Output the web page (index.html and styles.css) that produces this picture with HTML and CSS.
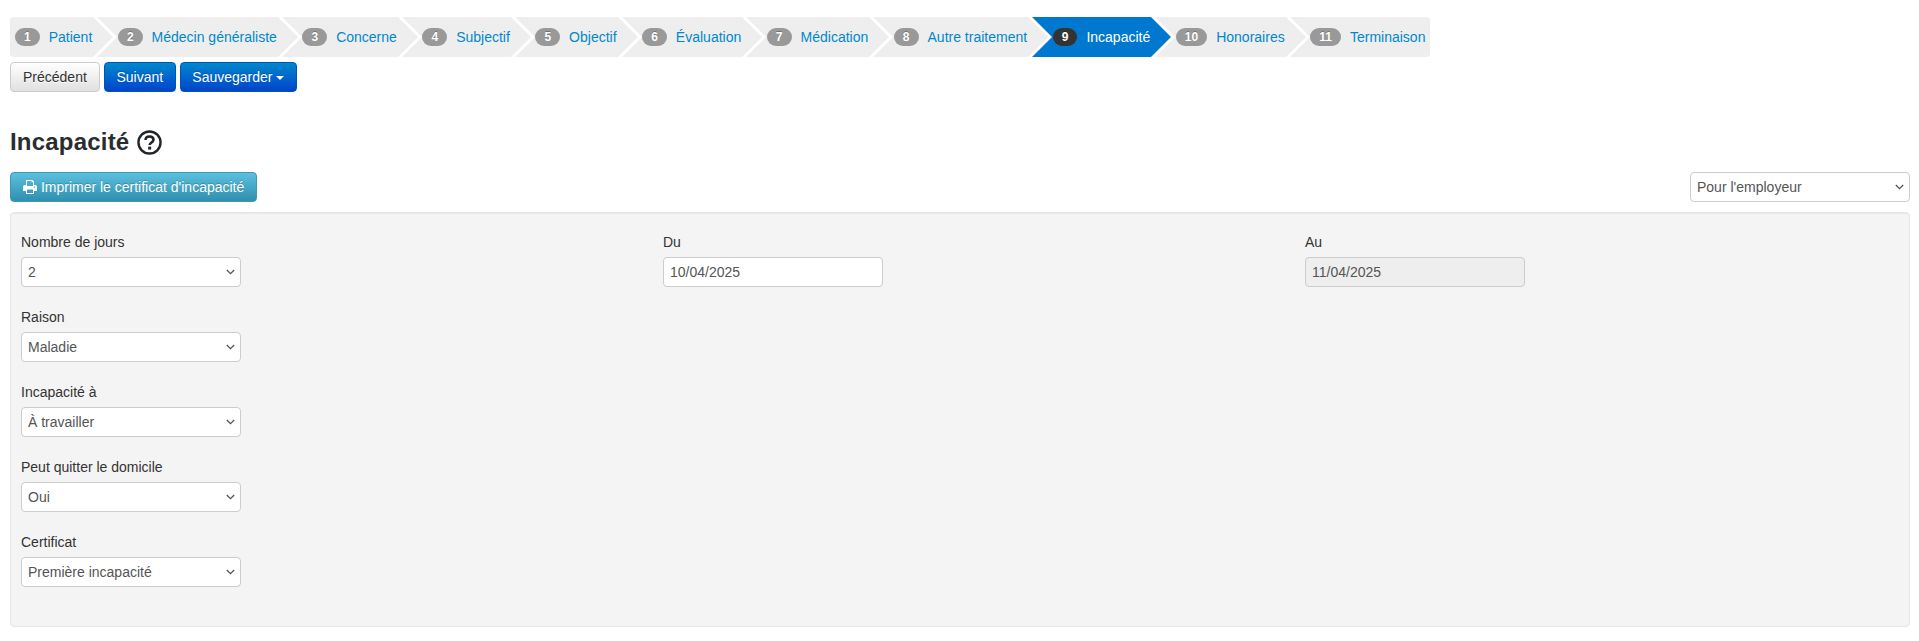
FILE: index.html
```html
<!DOCTYPE html>
<html lang="fr">
	<head>
		<meta charset="utf-8">
		<title>Incapacité</title>
		<link rel="stylesheet" href="styles.css">
	</head>
	<body>
		<ol class="wizard">
			<li class="step"><span class="badge">1</span><a href="#">Patient</a></li>
			<li class="step"><span class="badge">2</span><a href="#">Médecin généraliste</a></li>
			<li class="step"><span class="badge">3</span><a href="#">Concerne</a></li>
			<li class="step"><span class="badge">4</span><a href="#">Subjectif</a></li>
			<li class="step"><span class="badge">5</span><a href="#">Objectif</a></li>
			<li class="step"><span class="badge">6</span><a href="#">Évaluation</a></li>
			<li class="step"><span class="badge">7</span><a href="#">Médication</a></li>
			<li class="step"><span class="badge">8</span><a href="#">Autre traitement</a></li>
			<li class="step active"><span class="badge">9</span><a href="#">Incapacité</a></li>
			<li class="step"><span class="badge">10</span><a href="#">Honoraires</a></li>
			<li class="step last"><span class="badge">11</span><a href="#">Terminaison</a></li>
		</ol>

		<div class="toolbar">
			<button type="button" class="btn btn-default">Précédent</button>
			<button type="button" class="btn btn-primary">Suivant</button>
			<button type="button" class="btn btn-primary">Sauvegarder<span class="caret"></span></button>
		</div>

		<h2 class="title">Incapacité
			<svg class="help" width="25" height="25" viewBox="0 0 24 24">
				<circle cx="12" cy="12" r="10.6" fill="none" stroke="#212529" stroke-width="2.3"/>
				<path d="M8.200 9.700c0-2.300 1.700-3.500 3.800-3.500s3.800 1.200 3.800 3.100c0 2.700-3.600 2.600-3.600 5.200" fill="none" stroke="#212529" stroke-width="2.5"/>
				<rect x="10.700" y="16" width="2.900" height="2.800" fill="#212529"/>
			</svg>
		</h2>

		<div class="actions">
			<button type="button" class="btn btn-info">
				<svg class="print" width="14" height="14" viewBox="0 0 14 14">
					<path fill="#fff" fill-rule="evenodd" d="M3 0h6.500L11 1.500V5h1.200C13.200 5 14 5.800 14 6.800V11h-3v3H3v-3H0V6.800C0 5.800.8 5 1.800 5H3zM4 1v5h6V2.300H8.700V1zM4 9.500V13h6V9.500zM11.500 6.300a.7.7 0 1 0 0 1.400.7.7 0 0 0 0-1.400z"/>
				</svg>
				Imprimer le certificat d'incapacité
			</button>
			<select class="field">
				<option>Pour l'employeur</option>
			</select>
		</div>

		<form class="panel">
			<div class="col">
				<div class="group">
					<label>Nombre de jours</label>
					<select class="field"><option>2</option></select>
				</div>
				<div class="group">
					<label>Raison</label>
					<select class="field"><option>Maladie</option></select>
				</div>
				<div class="group">
					<label>Incapacité à</label>
					<select class="field"><option>À travailler</option></select>
				</div>
				<div class="group">
					<label>Peut quitter le domicile</label>
					<select class="field"><option>Oui</option></select>
				</div>
				<div class="group">
					<label>Certificat</label>
					<select class="field"><option>Première incapacité</option></select>
				</div>
			</div>
			<div class="col">
				<div class="group">
					<label>Du</label>
					<input class="field" type="text" value="10/04/2025">
				</div>
			</div>
			<div class="col">
				<div class="group">
					<label>Au</label>
					<input class="field" type="text" value="11/04/2025" disabled>
				</div>
			</div>
		</form>
	</body>
</html>
```

FILE: styles.css
```css
* {
	box-sizing: border-box;
}

body {
	margin: 0;
	padding: 17px 9px 0 10px;
	font-family: "Liberation Sans", Arial, sans-serif;
	font-size: 14px;
	line-height: 20px;
	color: #333;
	background-color: #fff;
}

/* wizard */
.wizard {
	display: flex;
	width: max-content;
	height: 40px;
	margin: 0;
	padding: 0;
	list-style: none;
	background-color: #eee;
	border-radius: 4px;
	overflow: hidden;
}

.step {
	position: relative;
	display: flex;
	align-items: center;
	padding: 0 1px 0 24.6px;
}

.step:first-child {
	padding-left: 5px;
}

.step::before,
.step::after {
	content: "";
	position: absolute;
	left: 100%;
	z-index: 1;
	border-style: solid;
	border-color: transparent;
}

/* white line of the chevron, sticks out of the bar by 4px */
.step::before {
	top: -4px;
	border-width: 24px 0 24px 24px;
	border-left-color: #fff;
}

.step::after {
	top: 0;
	border-width: 20px 0 20px 20px;
	border-left-color: #eee;
}

.step.last {
	padding-right: 5px;
}

.step.last::before,
.step.last::after {
	display: none;
}

.step a {
	color: #0088cc;
	text-decoration: none;
}

.badge {
	margin-right: 9px;
	padding: 3px 9px;
	font-size: 12px;
	font-weight: bold;
	line-height: 12px;
	color: #fff;
	background-color: #999;
	border-radius: 9px;
	text-shadow: 0 -1px 0 rgba(0, 0, 0, 0.25);
}

.step.active {
	background-color: #0078cf;
}

.step.active::after {
	border-left-color: #0078cf;
}

.step.active a {
	color: #fff;
}

.step.active .badge {
	background-color: #333;
}

/* buttons */
.btn {
	display: inline-block;
	height: 30px;
	padding: 4px 12px;
	font-family: inherit;
	font-size: 14px;
	line-height: 20px;
	border: 1px solid transparent;
	border-radius: 4px;
}

.btn-default {
	color: #333;
	background-image: linear-gradient(to bottom, #fff, #e0e0e0);
	border-color: #ccc;
	text-shadow: 0 1px 0 #fff;
}

.btn-primary {
	padding: 4px 11.6px;
	color: #fff;
	background-image: linear-gradient(to bottom, #0088cc, #0044cc);
	border-color: #0055b3;
	text-shadow: 0 -1px 0 rgba(0, 0, 0, 0.2);
}

.btn-info {
	color: #fff;
	background-image: linear-gradient(to bottom, #5bc0de, #2f8fae);
	border-color: #3f97b3;
	text-shadow: 0 -1px 0 rgba(0, 0, 0, 0.2);
}

.caret {
	display: inline-block;
	margin-left: 4px;
	vertical-align: middle;
	border-top: 4px solid #fff;
	border-left: 4px solid transparent;
	border-right: 4px solid transparent;
}

.toolbar {
	display: flex;
	gap: 4px;
	margin-top: 5px;
}

.title {
	display: flex;
	align-items: center;
	gap: 8px;
	height: 26px;
	margin: 37px 0 17px;
	font-size: 24px;
	line-height: 26px;
	font-weight: bold;
	letter-spacing: 0.2px;
	color: #2a2d30;
}

.actions {
	display: flex;
	justify-content: space-between;
}

.print {
	vertical-align: -2px;
}

/* form */
.panel {
	display: grid;
	grid-template-columns: 642px 642px 1fr;
	margin-top: 10px;
	padding: 19px 10px 0;
	height: 415px;
	background-color: #f4f4f4;
	border: 1px solid #e6e6e6;
	border-radius: 4px;
	box-shadow: inset 0 1px 1px rgba(0, 0, 0, 0.05);
}

.group {
	margin-bottom: 20px;
}

.group label {
	display: block;
	margin-bottom: 5px;
	color: #333;
}

.field {
	display: block;
	width: 220px;
	height: 30px;
	padding: 4px 6px;
	font-family: inherit;
	font-size: 14px;
	color: #555;
	background-color: #fff;
	border: 1px solid #ccc;
	border-radius: 4px;
}

select.field {
	appearance: none;
	background-image: url("data:image/svg+xml,%3Csvg xmlns='http://www.w3.org/2000/svg' width='9' height='6'%3E%3Cpath d='M.8 1l3.700 3.700L8.200 1' fill='none' stroke='%23555' stroke-width='1.300'/%3E%3C/svg%3E");
	background-repeat: no-repeat;
	background-position: right 5px center;
}

.field:disabled {
	color: #555;
	background-color: #eee;
	opacity: 1;
}
```
